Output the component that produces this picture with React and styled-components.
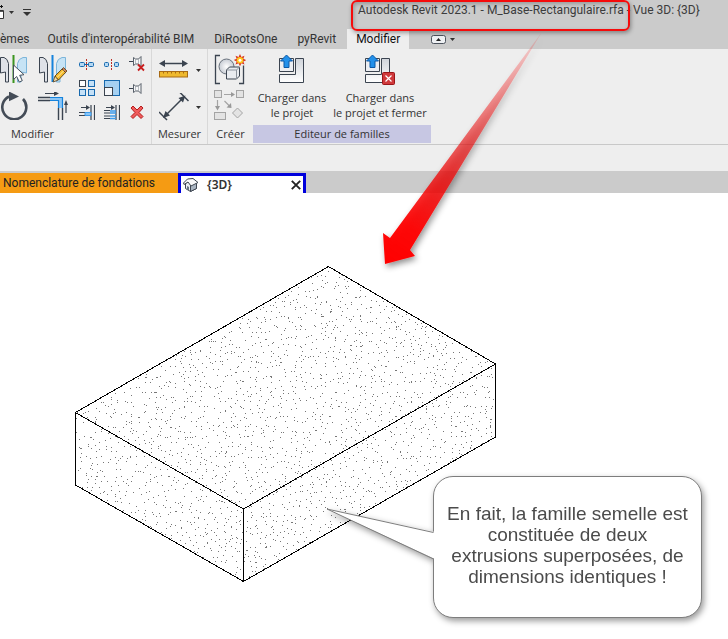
import React from 'react';
import styled, { createGlobalStyle } from 'styled-components';

const Global = createGlobalStyle`
  *, *::before, *::after { box-sizing: border-box; }
  body {
    margin: 0;
    background: #ffffff;
    color: #333333;
    font: 11px/15px "Open Sans", "Noto Sans", sans-serif;
  }
  button {
    margin: 0;
    padding: 0;
    border: 0;
    background: none;
    color: inherit;
    font: inherit;
    cursor: pointer;
  }
  svg { display: block; }
`;

const panelFont = '"Open Sans", "Noto Sans", sans-serif';
const chromeFont = 'Roboto, "Noto Sans", sans-serif';

const Page = styled.div`
  position: relative;
  display: flex;
  flex-direction: column;
  min-height: 100vh;
  overflow: hidden;
  font-family: ${panelFont};
  font-size: 11px;
`;

const TitleBar = styled.header`
  display: flex;
  align-items: flex-start;
  height: 29px;
  background: #cbcbcb;
  font-family: ${chromeFont};
`;

const QuickAccess = styled.div`
  display: flex;
  align-items: center;
  gap: 9px;
  flex: 0 0 358px;
  height: 24px;
`;

const DocumentTitle = styled.h1`
  margin: 0;
  padding-top: 2px;
  font-size: 12px;
  line-height: 16px;
  font-weight: 400;
  color: #3c3c3c;
  white-space: nowrap;
`;

const RibbonTabs = styled.nav`
  display: flex;
  align-items: stretch;
  height: 20px;
  background: #cbcbcb;
  font-family: ${chromeFont};
  font-size: 12px;
`;

const RibbonTab = styled.button`
  padding: 0 ${(p) => (p.$active ? 9 : 10)}px;
  margin-left: ${(p) => (p.$active ? 1 : 0)}px;
  background: ${(p) => (p.$active ? '#eeeeee' : 'transparent')};
  color: ${(p) => (p.$active ? '#111111' : '#333333')};
  line-height: 20px;
  white-space: nowrap;
  &:first-child { padding: 0 8px 0 0; }
`;

const RibbonToggle = styled.button`
  display: flex;
  align-items: center;
  gap: 4px;
  margin-left: 22px;
`;

const Ribbon = styled.section`
  display: flex;
  background: #eeeeee;
  border-bottom: 1px solid #c8c8c8;
`;

const Panel = styled.section`
  display: flex;
  flex-direction: column;
  flex: 0 0 auto;
  width: ${(p) => p.$width}px;
  border-right: ${(p) => (p.$divided ? '1px solid #d8d8d8' : '0')};
  padding-bottom: 1px;
`;

const PanelBody = styled.div`
  display: flex;
  height: 76px;
  padding-top: ${(p) => p.$top}px;
  padding-left: ${(p) => p.$left}px;
`;

const PanelCaption = styled.h2`
  margin: 0;
  padding-right: ${(p) => p.$shift || 0}px;
  font-size: 11px;
  line-height: 18px;
  font-weight: 400;
  text-align: center;
  background: ${(p) => (p.$tinted ? '#c7c7e3' : 'transparent')};
`;

const ToolColumn = styled.div`
  display: flex;
  flex-direction: column;
  gap: ${(p) => p.$gap || 9}px;
  margin-right: ${(p) => p.$after || 0}px;
`;

const SmallTools = styled.div`
  display: grid;
  grid-template-columns: repeat(3, 16px);
  grid-auto-rows: 16px;
  gap: 8px 9px;
  padding-top: 1px;
`;

const ToolButton = styled.button`
  display: flex;
  align-items: center;
  gap: ${(p) => p.$gap}px;
`;

const LoadButton = styled.button`
  display: flex;
  flex-direction: column;
  align-items: center;
  gap: 5px;
  width: ${(p) => p.$width}px;
  line-height: 15px;
  white-space: nowrap;
`;

const OptionsBar = styled.div`
  height: 26px;
  background: #eeeeee;
`;

const ViewTabs = styled.nav`
  display: flex;
  height: 22px;
  padding-top: 2px;
  background: #cbcbcb;
  font-family: ${chromeFont};
  font-size: 12px;
`;

const ScheduleTab = styled.button`
  width: 178px;
  padding-left: 3px;
  background: #f59b13;
  color: #222222;
  line-height: 20px;
  text-align: left;
  white-space: nowrap;
`;

const ActiveView = styled.div`
  display: flex;
  align-items: center;
  width: 128px;
  padding: 0 2px;
  background: #ffffff;
  border: 3px solid #0000dc;
  border-bottom: 0;
`;

const ViewName = styled.button`
  display: flex;
  align-items: center;
  gap: 8px;
  flex: 1;
  font-family: "Noto Sans", "Open Sans", sans-serif;
  font-weight: 600;
  line-height: 16px;
`;

const Viewport = styled.main`
  flex: 1;
  padding: 73px 0 0 75px;
  background: #ffffff;
`;

const Highlight = styled.div`
  position: absolute;
  left: 351px;
  top: 0;
  width: 279px;
  height: 31px;
  border: 2px solid #f50b0b;
  border-radius: 6px;
  box-shadow: 1px 2px 4px rgba(0, 0, 0, 0.35), inset 1px 2px 4px rgba(0, 0, 0, 0.25);
  pointer-events: none;
`;

const Pointer = styled.svg`
  position: absolute;
  left: 370px;
  top: 20px;
  pointer-events: none;
`;

const Callout = styled.aside`
  position: absolute;
  left: 433px;
  top: 476px;
  width: 269px;
  padding: 26px 12px 30px;
  border: 1px solid #7d7d7d;
  border-radius: 20px;
  background: #ffffff;
  filter: drop-shadow(2px 3px 3px rgba(0, 0, 0, 0.4));
  color: #4b4b4b;
  font-family: "Liberation Sans", Arial, sans-serif;
  font-size: 19px;
  line-height: 21px;
  text-align: center;
`;

const CalloutLine = styled.span`
  display: block;
  white-space: nowrap;
`;

const CalloutTail = styled.svg`
  position: absolute;
  left: -108px;
  top: 30px;
`;

const INK = '#3b4450';
const BLUE = '#1583dc';

const Caret = () => (
  <svg width="5" height="3" aria-hidden="true"><path d="M0 0h5L2.5 3z" fill="#333" /></svg>
);

const NewIcon = () => (
  <svg width="5" height="16" viewBox="0 0 5 16" aria-hidden="true">
    <path d="M0 6.5h3.5v8H0" fill="#fff" stroke="#333" />
    <path d="M0 7.5h3" stroke="#555" />
    <path d="M0 2.5h3M1.5 1v3" stroke="#111" />
  </svg>
);

const MoreIcon = () => (
  <svg width="8" height="7" aria-hidden="true">
    <path d="M0 .5h8" stroke="#333" /><path d="M0 3h8L4 7z" fill="#333" />
  </svg>
);

const ToggleIcon = () => (
  <svg width="15" height="9" viewBox="0 0 15 9" aria-hidden="true">
    <rect x=".5" y=".5" width="14" height="8" rx="2" fill="#eef0f3" stroke="#4c535d" />
    <path d="M5 6h5L7.500 3z" fill="#222" />
  </svg>
);

const Halves = () => (
  <>
    <path d="M.5 2.500h3.500q3.500 1 4.500 6v18.500H5.500V17L.5 18z" fill="#dfe2e8" stroke={INK} />
    <path d="M26.500 2.500H23q-4.500 1-5.500 6v18.500h3.500V17l5.500 1z" fill="#c6e3f5" stroke="#7cb5da" />
  </>
);

const AlignIcon = () => (
  <svg width="28" height="28" viewBox="0 0 28 28">
    <Halves />
    <path d="M13.500 0v28" stroke="#3b951f" strokeWidth="2" />
    <path d="M13.500 10v14.500l3.200-3 2.600 5.500 3-1.400-2.600-5.300 4.300-.6z" fill="#fff" stroke="#46505c" />
  </svg>
);

const MirrorIcon = () => (
  <svg width="30" height="28" viewBox="0 0 30 28">
    <g transform="translate(1 0)">
      <Halves />
      <path d="M13.500 0v27" stroke={BLUE} strokeWidth="2" />
      <path d="M14 27l2-6 3.500 4z" fill="#f3d9a4" stroke="#49371d" strokeWidth=".8" />
      <path d="M16 21l7-7 3.500 3.500-7 7.500z" fill="#f5bb2d" stroke="#5b4212" strokeWidth=".9" />
      <path d="M23 14l1.500-1.500 3.500 3.500-1.500 1.500z" fill="#c97a5a" stroke="#5b4212" strokeWidth=".8" />
      <path d="M18 22.500l7-7" stroke="#fff0a8" />
    </g>
  </svg>
);

const RotateIcon = () => (
  <svg width="28" height="28" viewBox="0 0 28 28">
    <path d="M23 7A12 12 0 1 1 9 4.500" fill="none" stroke="#444c57" strokeWidth="2.600" />
    <path d="M9 -.5l10 5-10 4.800z" fill="#444c57" />
  </svg>
);

const TrimCornerIcon = () => (
  <svg width="30" height="28" viewBox="0 0 30 28" fill="none">
    <path d="M12 5.500h12.500V16h-4V8.500H12z" fill="#8bc6f7" />
    <path d="M0 5.500h12M0 8.500h12M20.500 16v12M24.500 16v12" stroke={INK} strokeWidth="1.400" />
    <path d="M12 5.500h12.500V16M12 8.500h8.500V16" stroke={BLUE} strokeWidth="1.200" />
    <path d="M7 1.500h10M28 21v-9" stroke={INK} strokeWidth="1.200" />
    <path d="M16-1l5 2.500-5 2.500zM26 13l2-5 2 5z" fill={INK} />
  </svg>
);

const SplitIcon = ({ gap }) => (
  <svg width="16" height="16" viewBox="0 0 16 16">
    {gap ? (
      <g fill="#b5d8f3" stroke="#1769ae">
        <rect x=".5" y="6.500" width="4" height="4" rx="1" />
        <rect x="10.500" y="6.500" width="4" height="4" rx="1" />
      </g>
    ) : (
      <g fill="#b5d8f3" stroke="#1769ae">
        <rect x=".5" y="6.500" width="5" height="4" rx="1" />
        <rect x="9.500" y="6.500" width="5" height="4" rx="1" />
        <path d="M6 8.500h3" />
      </g>
    )}
    <path d="M7.500 3v11" stroke="#b92d25" strokeDasharray="2 1" />
  </svg>
);

const PinIcon = ({ removed }) => (
  <svg width="16" height="16" viewBox="0 0 16 16">
    <g transform={removed ? 'translate(0 -3)' : undefined}>
      <path d="M0 8.500h4" stroke={INK} />
      <path d="M4.500 4.500l2 1.500h3l2.500-2.500v10L9.500 11h-3l-2 1.500z" fill="#f7f7f8" stroke="#59616b" />
      <path d="M6.500 6v5M9.500 6v5" stroke="#9aa0a8" strokeWidth=".7" />
    </g>
    {removed && <path d="M9 8.500l6 6m0-6l-6 6" stroke="#c91f1f" strokeWidth="1.800" />}
  </svg>
);

const ArrayIcon = () => (
  <svg width="16" height="16" viewBox="0 0 16 16" fill="#fff">
    <rect x=".5" y=".5" width="6" height="6" stroke={INK} />
    <g fill="#c5e1f7" stroke="#1769ae">
      <rect x="9.500" y=".5" width="6" height="6" />
      <rect x=".5" y="9.500" width="6" height="6" />
      <rect x="9.500" y="9.500" width="6" height="6" />
    </g>
  </svg>
);

const ScaleIcon = () => (
  <svg width="16" height="16" viewBox="0 0 16 16">
    <rect x=".5" y=".5" width="15" height="15" fill="#a6d1f2" stroke="#1769ae" />
    <rect x=".5" y="7.500" width="8" height="8" fill="#f6f7f9" stroke={INK} />
  </svg>
);

const TrimIcon = ({ multiple }) => (
  <svg width="16" height="16" viewBox="0 0 16 16" fill="none">
    <path d="M12 1v15M15.500 1v15" stroke={INK} strokeWidth="1.200" />
    <path d="M2 3.500h6" stroke={INK} />
    <path d="M7 1l4 2.500L7 6z" fill={INK} />
    {multiple ? (
      <>
        <path d="M0 6.500h6M0 9h6M0 12h6M0 14.500h6" stroke={INK} />
        <path d="M6 7h6M6 9h6M6 12h6M6 14.500h6" stroke="#3d9bea" strokeWidth="1.300" />
      </>
    ) : (
      <>
        <path d="M0 8.500h6M0 11.500h6" stroke={INK} />
        <path d="M6 8.500h6v3H6z" fill="#8bc6f7" stroke="#3d9bea" />
      </>
    )}
  </svg>
);

const DeleteIcon = () => (
  <svg width="16" height="16" viewBox="0 0 16 16">
    <path d="M4 2l4 4 4-4 2 2-4 4.500 4 4-2 2-4-4-4 4-2-2 4-4L2 4z" fill="#ef5b5b" stroke="#b51c1c" />
  </svg>
);

const RulerIcon = () => (
  <svg width="30" height="28" viewBox="0 0 30 28">
    <path d="M4 7.500h22" stroke={INK} strokeWidth="1.500" />
    <path d="M0 7.500l6-3.500v7zM29 7.500L23 4v7z" fill={INK} />
    <rect x=".5" y="15.500" width="28" height="5.500" fill="#efb92e" stroke="#a76a14" />
    <path d="M4.500 15.500v2M8.500 15.500v2M12.500 15.500v2M16.500 15.500v2M20.500 15.500v2M24.500 15.500v2" stroke="#a76a14" />
  </svg>
);

const DimensionIcon = () => (
  <svg width="30" height="28" viewBox="0 0 30 28">
    <path d="M6 23L25 4M0 19l8 8M21-.5l8.500 8.500" stroke={INK} strokeWidth="1.500" />
    <path d="M4 25l2.500-7L11 22.500zM26.500 2.500L24 9.500 19.500 5z" fill={INK} />
  </svg>
);

const CreateGroupIcon = () => (
  <svg width="32" height="31" viewBox="0 0 32 31">
    <defs>
      <radialGradient id="sphere"><stop offset="0" stopColor="#fff" /><stop offset="1" stopColor="#c7ccd4" /></radialGradient>
    </defs>
    <path d="M6 1.500H1.500v28H6M25 29.500h4.500v-18" fill="none" stroke={INK} strokeWidth="1.300" />
    <circle cx="12.500" cy="12.500" r="7.500" fill="url(#sphere)" stroke="#69717c" />
    <path d="M12.500 16l3-3h10v9l-3 3h-10z" fill="#e9ecf0" stroke={INK} strokeLinejoin="round" />
    <path d="M12.500 16h10v9m0-9l3-3" fill="none" stroke="#8d949d" />
    <path d="M26 0l1.400 3 3.100-1.200-1.200 3 3 1.200-3 1.400 1.200 3.100-3.100-1.200L26 12.300l-1.400-3-3.100 1.200 1.200-3.100-3-1.400 3-1.200-1.200-3 3.100 1.200z" fill="#d8321b" />
    <circle cx="26" cy="6.200" r="3.300" fill="#ffc51c" /><circle cx="26" cy="6.200" r="1.500" fill="#fff" />
  </svg>
);

const CreateSimilarIcon = () => (
  <svg width="32" height="30" viewBox="0 0 32 30" fill="none" stroke="#a4a4a4">
    <g fill="#e3e3e3">
      <rect x=".5" y=".5" width="7" height="7" /><rect x="22.500" y=".5" width="7" height="7" />
      <rect x=".5" y="22.500" width="11" height="7" /><path d="M23.500 18l5 5-5 5-5-5z" />
    </g>
    <path d="M10 4.500h8M3.500 10v7M10.500 11l5 5" strokeWidth="1.200" />
    <path d="M17 2l4 2.500L17 7zM1 16h5l-2.500 4.500zM12.500 17.500l5 .5-.5-5z" fill="#999" stroke="none" />
  </svg>
);

const LoadIcon = ({ closing }) => (
  <svg width="30" height="32" viewBox={closing ? '2 0 30 32' : '0 0 30 32'}>
    <defs>
      <linearGradient id="part" x2="0" y2="1"><stop stopColor="#d0d4da" /><stop offset="1" stopColor="#fff" /></linearGradient>
    </defs>
    <path d="M2.500 5.500h14v13h-14z" fill="#eceef2" stroke={INK} />
    <path d="M18.500 5.500h8v24h-24v-8h16z" fill="url(#part)" stroke={INK} />
    <path d="M9.500 2l6 6h-3.500v6.500h-5V8H3.500z" fill="#2290ea" stroke="#0b58a6" />
    {closing && (
      <>
        <rect x="19.500" y="19.500" width="12" height="12" rx="1" fill="#d0393b" stroke="#9b1518" />
        <path d="M22.500 22.500l6 6m0-6l-6 6" stroke="#fff" strokeWidth="1.200" />
      </>
    )}
  </svg>
);

const HouseIcon = () => (
  <svg width="16" height="14" viewBox="0 0 16 14">
    <path d="M2.500 5.500v5l5 3 6-3v-6L10 1z" fill="#e9edf1" stroke="#3f4751" />
    <path d="M7.500 7.500v6l6-3v-6z" fill="#aab5c1" stroke="#3f4751" />
    <path d="M.5 5L4.500 1 10 .5l5 4-7 3.500-3-4-4 2.500z" fill="#fafafa" stroke="#3f4751" />
    <path d="M4 8v3.500l2 1V9z" fill="#697581" />
  </svg>
);

const CloseIcon = () => (
  <svg width="10" height="10" viewBox="0 0 10 10"><path d="M.8.8l8.400 8.400m0-8.400L.8 9.200" stroke="#222" strokeWidth="1.900" /></svg>
);

/* Concrete stipple: a jittered grid of single-pixel dots kept inside the slab outline. */
const OUTLINE = [[253, 0], [420, 98], [420, 171], [168, 315], [1, 219], [1, 146]];

function inside(x, y) {
  let hit = false;
  for (let i = 0, j = OUTLINE.length - 1; i < OUTLINE.length; j = i++) {
    const [ax, ay] = OUTLINE[i];
    const [bx, by] = OUTLINE[j];
    if (ay > y !== by > y && x < ((bx - ax) * (y - ay)) / (by - ay) + ax) hit = !hit;
  }
  return hit;
}

function stipple() {
  let seed = 20231;
  const next = () => {
    seed = (seed * 1664525 + 1013904223) % 4294967296;
    return seed / 4294967296;
  };
  let d = '';
  for (let row = 0; row < 316; row += 5) {
    for (let col = 0; col < 422; col += 5) {
      const x = Math.floor(col + next() * 7);
      const y = Math.floor(row + next() * 7);
      if (next() < 0.74 && inside(x, y)) d += `M${x} ${y}h1v1h-1z`;
    }
  }
  return d;
}

const DOTS = stipple();

const Slab = () => (
  <svg width="422" height="318" viewBox="0 0 422 318" shapeRendering="crispEdges" role="img" aria-label="Semelle rectangulaire">
    <path d={DOTS} fill="#777777" />
    <path
      d="M253.500.5l167 97.500v73L168.500 315.500.5 219V146.500zM.5 146.500l168 96.500 252-145M168.500 243v72.500"
      fill="none"
      stroke="#000"
    />
  </svg>
);

const SMALL_TOOLS = [
  ['Scinder', <SplitIcon />],
  ['Scinder avec espace', <SplitIcon gap />],
  ['Libérer', <PinIcon removed />],
  ['Réseau', <ArrayIcon />],
  ['Échelle', <ScaleIcon />],
  ['Verrouiller', <PinIcon />],
  ['Ajuster un élément', <TrimIcon />],
  ['Ajuster plusieurs éléments', <TrimIcon multiple />],
  ['Supprimer', <DeleteIcon />],
];

const Tool = ({ label, gap = 7, children }) => (
  <ToolButton type="button" aria-label={label} $gap={gap}>{children}</ToolButton>
);

export default function App() {
  return (
    <Page>
      <Global />
      <TitleBar>
        <QuickAccess>
          <Tool label="Nouveau" gap={4}><NewIcon /><Caret /></Tool>
          <Tool label="Personnaliser"><MoreIcon /></Tool>
        </QuickAccess>
        <DocumentTitle>Autodesk Revit 2023.1 - M_Base-Rectangulaire.rfa - Vue 3D: {'{3D}'}</DocumentTitle>
      </TitleBar>

      <RibbonTabs>
        <RibbonTab type="button">èmes</RibbonTab>
        <RibbonTab type="button">Outils d'interopérabilité BIM</RibbonTab>
        <RibbonTab type="button">DiRootsOne</RibbonTab>
        <RibbonTab type="button">pyRevit</RibbonTab>
        <RibbonTab type="button" $active>Modifier</RibbonTab>
        <RibbonToggle type="button" aria-label="Réduire le ruban"><ToggleIcon /><Caret /></RibbonToggle>
      </RibbonTabs>

      <Ribbon>
        <Panel $width={152} $divided>
          <PanelBody $top={6} $left={0}>
            <ToolColumn $after={10}>
              <Tool label="Aligner"><AlignIcon /></Tool>
              <Tool label="Rotation"><RotateIcon /></Tool>
            </ToolColumn>
            <ToolColumn $after={11}>
              <Tool label="Symétrie"><MirrorIcon /></Tool>
              <Tool label="Ajuster en angle"><TrimCornerIcon /></Tool>
            </ToolColumn>
            <SmallTools>
              {SMALL_TOOLS.map(([label, icon]) => <Tool key={label} label={label}>{icon}</Tool>)}
            </SmallTools>
          </PanelBody>
          <PanelCaption $shift={86}>Modifier</PanelCaption>
        </Panel>
        <Panel $width={56} $divided>
          <PanelBody $top={7} $left={7}>
            <ToolColumn>
              <Tool label="Mesurer"><RulerIcon /><Caret /></Tool>
              <Tool label="Cote alignée"><DimensionIcon /><Caret /></Tool>
            </ToolColumn>
          </PanelBody>
          <PanelCaption>Mesurer</PanelCaption>
        </Panel>
        <Panel $width={45}>
          <PanelBody $top={5} $left={6}>
            <ToolColumn $gap={5}>
              <Tool label="Créer un groupe"><CreateGroupIcon /></Tool>
              <Tool label="Créer un élément similaire"><CreateSimilarIcon /></Tool>
            </ToolColumn>
          </PanelBody>
          <PanelCaption>Créer</PanelCaption>
        </Panel>
        <Panel $width={178}>
          <PanelBody $top={4} $left={0}>
            <LoadButton type="button" $width={78}>
              <LoadIcon />
              <span>Charger dans<br />le projet</span>
            </LoadButton>
            <LoadButton type="button" $width={98}>
              <LoadIcon closing />
              <span>Charger dans<br />le projet et fermer</span>
            </LoadButton>
          </PanelBody>
          <PanelCaption $tinted>Editeur de familles</PanelCaption>
        </Panel>
      </Ribbon>

      <OptionsBar />

      <ViewTabs>
        <ScheduleTab type="button">Nomenclature de fondations</ScheduleTab>
        <ActiveView>
          <ViewName type="button"><HouseIcon />{'{3D}'}</ViewName>
          <Tool label="Fermer la vue"><CloseIcon /></Tool>
        </ActiveView>
      </ViewTabs>

      <Viewport><Slab /></Viewport>

      <Highlight />
      <Pointer width="190" height="260" viewBox="0 0 190 260" aria-hidden="true">
        <defs>
          <linearGradient id="fade" gradientUnits="userSpaceOnUse" x1="172" y1="12" x2="16" y2="243">
            <stop offset="0" stopColor="#ff0000" stopOpacity="0.1" />
            <stop offset="0.5" stopColor="#e80000" stopOpacity="0.6" />
            <stop offset="0.85" stopColor="#ff0000" stopOpacity="0.95" />
            <stop offset="1" stopColor="#ff0000" />
          </linearGradient>
          <filter id="arrowShadow" x="-20%" y="-20%" width="140%" height="140%">
            <feDropShadow dx="2" dy="3" stdDeviation="3" floodColor="#000" floodOpacity="0.45" />
          </filter>
        </defs>
        <path d="M172 12L20 218l-7-5 2 31 30-8-5-6z" fill="url(#fade)" filter="url(#arrowShadow)" />
      </Pointer>
      <Callout>
        <CalloutTail width="110" height="56" viewBox="0 0 110 56" aria-hidden="true">
          <path d="M109 25L1 2l108 50z" fill="#fff" />
          <path d="M107.500 25.500L1 2l106.500 50" fill="none" stroke="#7d7d7d" />
        </CalloutTail>
        <CalloutLine>En fait, la famille semelle est</CalloutLine>
        <CalloutLine>constituée de deux</CalloutLine>
        <CalloutLine>extrusions superposées, de</CalloutLine>
        <CalloutLine>dimensions identiques !</CalloutLine>
      </Callout>
    </Page>
  );
}
